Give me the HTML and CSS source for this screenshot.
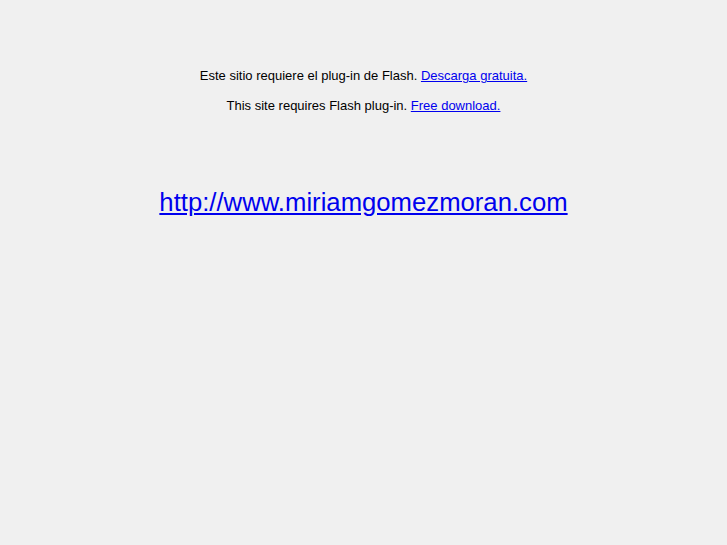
FILE: index.html
```html
<!DOCTYPE html>
<html>
<head>
<meta charset="utf-8">
<link rel="stylesheet" href="styles.css">
</head>
<body>
<div class="page">
  <p class="msg">Este sitio requiere el plug-in de Flash. <a href="#">Descarga gratuita.</a></p>
  <p class="msg">This site requires Flash plug-in. <a href="#">Free download.</a></p>
  <p class="url"><a href="#">http://www.miriamgomezmoran.com</a></p>
</div>
</body>
</html>
```
FILE: styles.css
```css
html, body {
  margin: 0;
  padding: 0;
  background: #f0f0f0;
}
.page {
  padding-top: 68px;
  text-align: center;
  font-family: "Liberation Sans", Arial, sans-serif;
  color: #000;
}
.msg {
  margin: 0 0 14px 0;
  font-size: 13px;
  line-height: 16px;
}
.url {
  margin: 73px 0 0 0;
  font-size: 25.7px;
  line-height: 30px;
}
a {
  color: #0000ee;
}
```
